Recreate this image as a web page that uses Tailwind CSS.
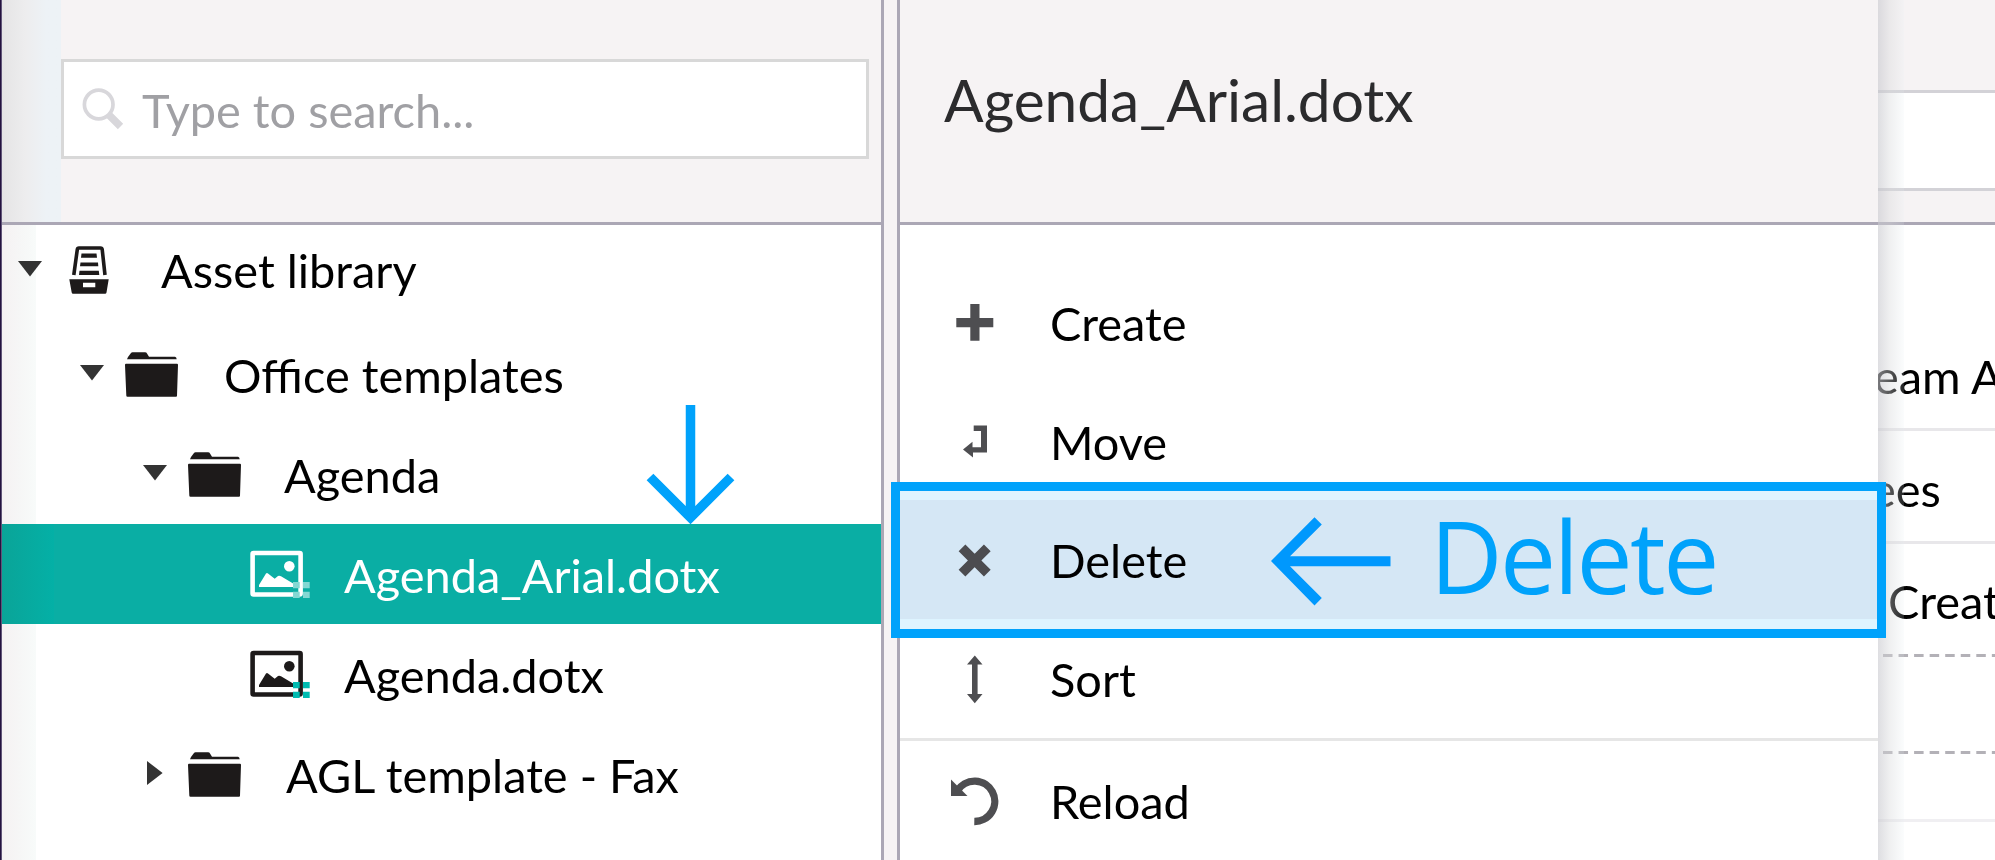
<!DOCTYPE html>
<html lang="en">
<head>
<meta charset="utf-8">
<title>Asset library</title>
<script src="https://cdn.jsdelivr.net/npm/@tailwindcss/browser@4"></script>
</head>
<body class="font-[Lato,sans-serif] text-[46.900px] leading-[48px] text-black bg-white overflow-hidden">
<svg class="hidden">
  <symbol id="folder" viewBox="0 0 53 45"><path d="M2 7.3L3 5L6 1Q6.500 .3 7.500 .3H20Q21.500 .3 22 1.500L24 4.700H50Q51.500 5 51.700 7.300ZM1 11.700H52Q53 11.700 53 13L52 43.500Q52 44.700 51 44.700H2.500Q1.300 44.700 1.300 43.500L0 13Q0 11.700 1 11.700Z"/></symbol>
  <symbol id="image" viewBox="0 0 60 49"><rect x="2.600" y="3" width="48" height="41.500" rx="1" fill="none" stroke="currentColor" stroke-width="4.600"/><circle cx="39.300" cy="16.300" r="5.300"/><path d="M9 37V35L16 23.500Q17 22.500 18 23.500L24.700 28.700L28 26Q29.300 25.300 31 26.300L44 34V37Z"/></symbol>
  <symbol id="down" viewBox="0 0 24 16"><path d="M0 0H24L12 15.600Z"/></symbol>
</svg>
<div class="relative flex h-[860px] w-[1995px] overflow-hidden">
  <div class="w-[2px] shrink-0 bg-linear-to-r from-[#24123f] from-50% to-[#a79eb5]"></div>

  <!-- Tree panel -->
  <section class="relative flex w-[879px] shrink-0 flex-col">
    <header class="flex h-[222px] bg-[#f6f3f4] pl-[59px] pt-[59px]">
      <div class="relative z-10 flex h-[100px] w-[808px] items-center border-3 border-[#d8d8d8] bg-white pl-[18px] text-[#a0a0a4]">
        <svg class="h-[42px] w-[42px]" viewBox="0 0 42 42" fill="none" stroke="#d8d7db"><circle cx="16.700" cy="16.500" r="14.300" stroke-width="3.700"/><path d="M27 27L38.500 38.500" stroke-width="7.500"/></svg>
        <span class="ml-[18px] mt-[2px] whitespace-nowrap">Type to search...</span>
      </div>
    </header>
    <div class="h-[3px] shrink-0 bg-[#aba7b5]"></div>
    <ul class="whitespace-nowrap">
      <li class="flex h-[99px] items-center pb-[9px] pl-[16px]">
        <svg class="mb-[3px] h-4 w-6" fill="#333"><use href="#down"/></svg>
        <svg class="ml-[27px] h-[48px] w-[40px]" viewBox="0 0 40 48" fill="#1d1a1a"><path d="M4.800 29L8.300 3.500Q8.500 2 10 2H31.500Q33 2 33.200 3.500L36 29" fill="none" stroke="#1d1a1a" stroke-width="3.600"/><path d="M12.500 7.500H27.500L28 11.700H12ZM11.500 16.500H29L29.300 20.300H11ZM10.500 24.700H29.800L30.300 29H10Z"/><path fill-rule="evenodd" d="M.3 33.300H39.700L37.500 46.500Q37.300 47.700 36 47.700H4Q3 47.700 2.700 46.500ZM14 36.700H26.300V41.300H14Z"/></svg>
        <span class="ml-[52px]">Asset library</span>
      </li>
      <li class="flex h-[100px] items-center pl-[78px]">
        <svg class="mb-[3px] h-4 w-6" fill="#333"><use href="#down"/></svg>
        <svg class="ml-[21px] h-[45px] w-[53px]" fill="#1d1a1a"><use href="#folder"/></svg>
        <span class="ml-[46px] mt-px">Office templates</span>
      </li>
      <li class="flex h-[100px] items-center pl-[141px]">
        <svg class="mb-[3px] h-4 w-6" fill="#333"><use href="#down"/></svg>
        <svg class="ml-[21px] h-[45px] w-[53px]" fill="#1d1a1a"><use href="#folder"/></svg>
        <span class="ml-[43px] mt-px">Agenda</span>
      </li>
      <li class="flex h-[100px] items-center bg-[#0aaea4] pl-[248px] text-white">
        <svg class="h-[49px] w-[60px]" viewBox="0 0 60 49" fill="currentColor"><use href="#image"/><path fill="#84d8d3" d="M43 32h6.700v6.300H43zM53 32h6.700v6.300H53zM43 41.700h6.700V48H43zM53 41.700h6.700V48H53z"/></svg>
        <span class="ml-[34px] mt-px">Agenda_Arial.dotx</span>
      </li>
      <li class="flex h-[100px] items-center pl-[248px]">
        <svg class="h-[49px] w-[60px] text-[#1d1a1a]" viewBox="0 0 60 49" fill="currentColor"><use href="#image"/><path fill="#00bbb0" d="M43 32h6.700v6.300H43zM53 32h6.700v6.300H53zM43 41.700h6.700V48H43zM53 41.700h6.700V48H53z"/></svg>
        <span class="ml-[34px] mt-px">Agenda.dotx</span>
      </li>
      <li class="flex h-[100px] items-center pl-[145px]">
        <svg class="mb-[2px] h-6 w-4" viewBox="0 0 16 24" fill="#333"><path d="M0 0V24L15.600 12Z"/></svg>
        <svg class="ml-[25px] h-[45px] w-[53px]" fill="#1d1a1a"><use href="#folder"/></svg>
        <span class="ml-[45px] mt-px">AGL template - Fax</span>
      </li>
    </ul>
    <!-- Inner edge shadow -->
    <div class="absolute left-0 top-0 h-[222px] w-[59px] bg-linear-to-r from-[#e5e4e5] via-[#ededee] via-40% to-[#edf2f6] to-75%"></div>
    <div class="absolute left-0 top-[225px] h-[299px] w-[34px] bg-linear-to-r from-[#f5f1f2] via-[#f6f6f6] to-[#f8fbfa] mix-blend-multiply"></div>
    <div class="absolute left-0 top-[524px] h-[100px] w-[52px] bg-linear-to-r from-[#0aa498] to-[#04b0a6]"></div>
    <div class="absolute left-0 top-[624px] h-[236px] w-[34px] bg-linear-to-r from-[#f5f1f2] via-[#f6f6f6] to-[#f8fbfa]"></div>
  </section>

  <div class="w-[19px] shrink-0 border-x-3 border-[#aba7b5] bg-[#f6f3f4]"></div>

  <!-- Context menu -->
  <section class="flex w-[978px] shrink-0 flex-col bg-white">
    <header class="flex h-[225px] items-center border-b-3 border-[#aba7b5] bg-[#f6f3f4] pb-[24px] pl-[44px] text-[58.600px] text-[#2b2b2d]">Agenda_Arial.dotx</header>
    <ul class="pt-[37px]">
      <li class="flex h-[119px] items-center pl-[50px]">
        <svg class="h-[50px] w-[50px]" viewBox="950 297 50 50" fill="#4e4e51"><path d="M970.300 304h9.200v14h13.800v9.200h-13.800v13.600h-9.200v-13.600h-14V318h14z"/></svg>
        <span class="ml-[50px] mt-[2px]">Create</span>
      </li>
      <li class="flex h-[119px] items-center pl-[50px]">
        <svg class="h-[50px] w-[50px]" viewBox="950 415.500 50 50" fill="#4e4e51"><path d="M973.700 425H987V452H973V456.900L963 449L972.500 441.300V446.700H981V430.500H973.700Z"/></svg>
        <span class="ml-[50px] mt-[2px]">Move</span>
      </li>
      <li class="flex h-[119px] items-center bg-[#d5e7f5] pl-[50px]">
        <svg class="h-[50px] w-[50px]" viewBox="950 534.500 50 50" fill="none" stroke="#4c4c50" stroke-width="9.500"><path d="M962 547.300L987.300 572.700M987.300 547.300L962 572.700"/></svg>
        <span class="ml-[50px] mt-px">Delete</span>
      </li>
      <li class="flex h-[119px] items-center pl-[50px]">
        <svg class="h-[50px] w-[50px]" viewBox="950 653.500 50 50" fill="#4e4e51"><path d="M974.800 655L982.500 664H977.600V693.500H982.500L974.800 702.700L967 693.500H972V664H967Z"/></svg>
        <span class="ml-[50px] mt-px">Sort</span>
      </li>
      <li class="flex h-[122px] items-center border-t-3 border-[#e6e6e6] pl-[50px]">
        <svg class="h-[50px] w-[50px]" viewBox="950 775.500 50 50" fill="none"><path d="M974.300 821A20.200 20.200 0 1 0 957.500 790" stroke="#4e4e51" stroke-width="7.300"/><path d="M951 779V795.500H967.500Z" fill="#4e4e51"/></svg>
        <span class="ml-[50px] mt-px">Reload</span>
      </li>
    </ul>
  </section>

  <!-- Content behind the menu -->
  <section class="relative flex w-[117px] shrink-0 flex-col overflow-hidden whitespace-nowrap">
    <div class="h-[225px] shrink-0 border-b-3 border-[#aba7b5] bg-[#f6f3f4] pt-[90px]">
      <div class="h-[101px] border-y-3 border-[#d3d2d7] bg-white"></div>
    </div>
    <div class="h-[206px] shrink-0 border-b-3 border-[#e8e7ea] pt-[127px]"><span class="-ml-[4px]">eam A</span></div>
    <div class="h-[113px] shrink-0 border-b-3 border-[#e8e7ea] pt-[34px]"><span class="-ml-[7px]">ees</span></div>
    <div class="h-[110px] shrink-0 pl-[10px] pt-[33px]">Creat</div>
    <svg class="h-[3px] w-full shrink-0" viewBox="0 0 117 3"><path d="M5 1.500H117" stroke="#b3b1b7" stroke-width="3" stroke-dasharray="9.500 6.050"/></svg>
    <div class="h-[94px] shrink-0"></div>
    <svg class="h-[3px] w-full shrink-0" viewBox="0 0 117 3"><path d="M5 1.500H117" stroke="#b3b1b7" stroke-width="3" stroke-dasharray="9.500 6.050"/></svg>
    <div class="h-[68px] shrink-0 border-b-3 border-[#f0eff2]"></div>
    <!-- Menu drop shadow -->
    <div class="absolute inset-y-0 left-0 w-[26px] bg-linear-to-r from-[#c8c8ce]/60 via-[#d8d9db]/40 via-45% to-[#e4eef2]/15"></div>
  </section>

  <!-- Annotations -->
  <div class="absolute left-[891px] top-[482px] h-[156px] w-[995px] border-9 border-[#00a2fb]">
    <div class="flex h-full flex-col justify-between">
      <div class="h-[9px] bg-[#def4ff]"></div>
      <div class="h-[10px] bg-[#def4ff]"></div>
    </div>
  </div>
  <svg class="absolute left-[640px] top-[400px] h-[130px] w-[100px]" viewBox="640 400 100 130" fill="none" stroke="#00a2fb" stroke-width="9.500"><path d="M690.500 405V518M650 477L690.500 517.500L731 477"/></svg>
  <svg class="absolute left-[1265px] top-[510px] h-[100px] w-[130px]" viewBox="1265 510 130 100" fill="#0098fd"><path d="M1314.500 517.300L1321.800 524.500L1290 556.300H1390.500V566.300H1290L1321.800 598L1314.500 605.500L1271 561Z"/></svg>
  <div class="absolute left-[1430px] top-[505px] whitespace-nowrap font-['Open_Sans'] text-[100px] leading-[101px] tracking-[-2.500px] text-[#00a2fb]">Delete</div>
</div>
</body>
</html>
